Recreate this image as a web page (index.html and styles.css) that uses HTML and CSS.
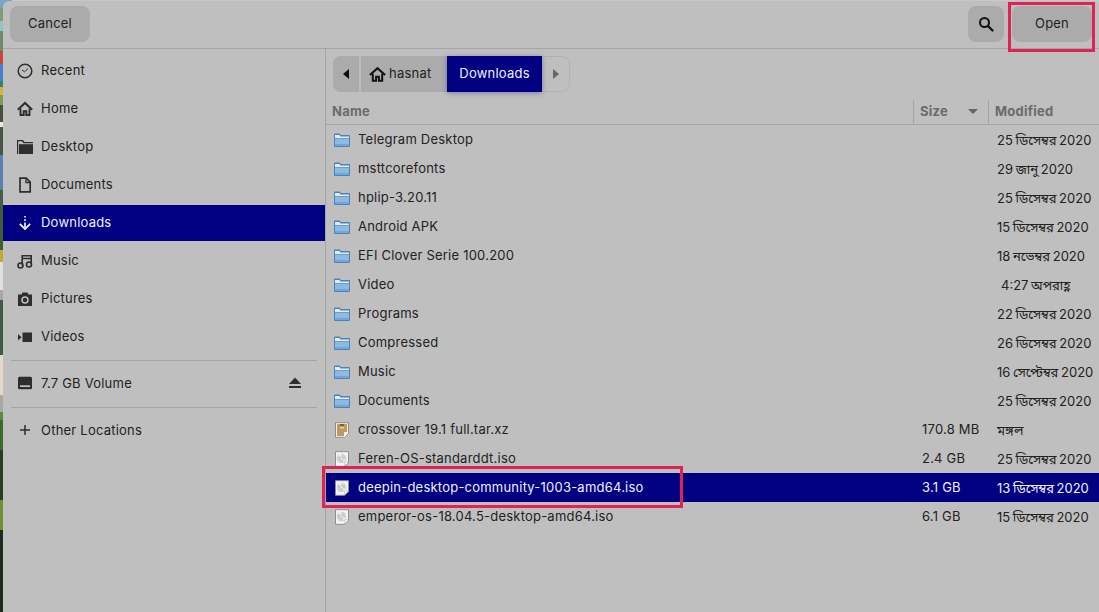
FILE: index.html
```html
<!DOCTYPE html>
<html lang="en">
<head>
<meta charset="utf-8">
<title>Open File</title>
<link rel="stylesheet" href="styles.css">
</head>
<body>
<div class="wallpaper"></div>
<div class="dialog">
  <header class="headerbar">
    <button class="btn cancel">Cancel</button>
    <span class="spacer"></span>
    <button class="btn search">
      <svg width="16" height="16" viewBox="0 0 16 16"><circle cx="6.500" cy="6.500" r="4.500" fill="none" stroke="#111" stroke-width="2"/><path d="M10 10l4.500 4.500" stroke="#111" stroke-width="2.400" stroke-linecap="round"/></svg>
    </button>
    <button class="btn open">Open</button>
  </header>
  <div class="main">
    <nav class="sidebar">
      <div class="place"><svg class="ico" viewBox="0 0 16 16"><circle cx="8" cy="8" r="6.800" fill="none" stroke="#2e2e2e" stroke-width="1.500"/><path d="M5 7l2.500 1.800L11 5.500" fill="none" stroke="#2e2e2e" stroke-width="1"/></svg><span>Recent</span></div>
      <div class="place"><svg class="ico" viewBox="0 0 16 16"><path d="M.8 8.800L8 2l7.200 6.800" fill="none" stroke="#2e2e2e" stroke-width="2"/><path d="M3.500 7.500V14h3.200v-3.800h2.600V14h3.200V7.500" fill="none" stroke="#2e2e2e" stroke-width="1.900"/></svg><span>Home</span></div>
      <div class="place"><svg class="ico" viewBox="0 0 16 16"><path d="M0 1h6l1.500 2H16v1.200H6.500L5 2.200H1.200V15H0z" fill="#2e2e2e"/><path d="M2 5.200h14V15H2z" fill="#2e2e2e"/></svg><span>Desktop</span></div>
      <div class="place"><svg class="ico" viewBox="0 0 16 16"><path d="M3 1.200h6.300L13.200 5v9.800H3z" fill="none" stroke="#2e2e2e" stroke-width="1.700"/><path d="M9 1v4.500h4.500" fill="none" stroke="#2e2e2e" stroke-width="1.300"/></svg><span>Documents</span></div>
      <div class="place selected"><svg class="ico" viewBox="0 0 16 16"><path d="M8 1v1.600M8 4.300v1.600M8 7.600v5" stroke="#fff" stroke-width="1.600" fill="none"/><path d="M2.800 8.800L8 14l5.200-5.200" stroke="#fff" stroke-width="1.700" fill="none"/></svg><span>Downloads</span></div>
      <div class="place"><svg class="ico" viewBox="0 0 16 16"><circle cx="3.500" cy="12.500" r="2.500" fill="none" stroke="#2e2e2e" stroke-width="1.600"/><circle cx="12" cy="11.500" r="2.500" fill="none" stroke="#2e2e2e" stroke-width="1.600"/><path d="M5.200 12.500V2.800h9V11M5.200 5.500h9" fill="none" stroke="#2e2e2e" stroke-width="1.600"/></svg><span>Music</span></div>
      <div class="place"><svg class="ico" viewBox="0 0 16 16"><path d="M1 3.500h3.500L5.500 1.500h5l1 2H15V15H1z" fill="#2e2e2e"/><circle cx="8" cy="9" r="3" fill="none" stroke="#bfbfbf" stroke-width="1.500"/></svg><span>Pictures</span></div>
      <div class="place"><svg class="ico" viewBox="0 0 16 16"><path d="M5.500 3.500H15V13H5.500zM1 5l3.500 3.200L1 11.500z" fill="#2e2e2e"/></svg><span>Videos</span></div>
      <div class="sep"></div>
      <div class="place volume"><svg class="ico" viewBox="0 0 16 16"><path d="M2.500 1.800h11A1.500 1.500 0 0115 3.300v9.500a1.500 1.500 0 01-1.500 1.500h-11A1.500 1.500 0 011 12.800V3.300a1.500 1.500 0 011.500-1.500z" fill="#2e2e2e"/><path d="M3 10.300h10v1.700H3z" fill="#bfbfbf"/></svg><span>7.7 GB Volume</span><span class="spacer"></span><svg class="eject" viewBox="0 0 14 14"><path d="M7 1.500l6 6.500H1z" fill="#2e2e2e"/><path d="M1 10h12v2H1z" fill="#2e2e2e"/></svg></div>
      <div class="sep"></div>
      <div class="place other"><svg class="ico" viewBox="0 0 16 16"><path d="M8 3v10M3 8h10" stroke="#2e2e2e" stroke-width="1.500"/></svg><span>Other Locations</span></div>
    </nav>
    <section class="content">
      <div class="pathbar">
        <div class="path">
          <span class="seg arrow"><svg width="7" height="10" viewBox="0 0 7 10"><path d="M6 0v10L0 5z" fill="#111"/></svg></span>
          <span class="seg home"><svg width="17" height="15" viewBox="0 0 17 15"><path d="M.9 8L8.500 1.200 16.100 8" fill="none" stroke="#111" stroke-width="2.100"/><path d="M3.800 6.800v7h3.300V9.800h2.800v4h3.300v-7" fill="none" stroke="#111" stroke-width="2"/></svg><span class="lbl">hasnat</span></span>
          <span class="seg current"><span class="lbl">Downloads</span></span>
          <span class="seg arrow next"><svg width="7" height="10" viewBox="0 0 7 10"><path d="M0 0v10l6-5z" fill="#666"/></svg></span>
        </div>
      </div>
      <div class="heads">
        <div class="h h-name">Name</div>
        <div class="h h-size">Size<svg width="10" height="5" viewBox="0 0 10 5"><path d="M0 0h10L5 5z" fill="#666"/></svg></div>
        <div class="h h-mod">Modified</div>
      </div>
      <div class="rows">
        <div class="row"><svg class="fi"><use href="#folder"/></svg><span class="n">Telegram Desktop</span><span class="s"></span><span class="m">25 ডিসেম্বর 2020</span></div>
        <div class="row"><svg class="fi"><use href="#folder"/></svg><span class="n">msttcorefonts</span><span class="s"></span><span class="m">29 জানু 2020</span></div>
        <div class="row"><svg class="fi"><use href="#folder"/></svg><span class="n">hplip-3.20.11</span><span class="s"></span><span class="m">25 ডিসেম্বর 2020</span></div>
        <div class="row"><svg class="fi"><use href="#folder"/></svg><span class="n">Android APK</span><span class="s"></span><span class="m">15 ডিসেম্বর 2020</span></div>
        <div class="row"><svg class="fi"><use href="#folder"/></svg><span class="n">EFI Clover Serie 100.200</span><span class="s"></span><span class="m">18 নভেম্বর 2020</span></div>
        <div class="row"><svg class="fi"><use href="#folder"/></svg><span class="n">Video</span><span class="s"></span><span class="m time">4:27 অপরাহ্ণ</span></div>
        <div class="row"><svg class="fi"><use href="#folder"/></svg><span class="n">Programs</span><span class="s"></span><span class="m">22 ডিসেম্বর 2020</span></div>
        <div class="row"><svg class="fi"><use href="#folder"/></svg><span class="n">Compressed</span><span class="s"></span><span class="m">26 ডিসেম্বর 2020</span></div>
        <div class="row"><svg class="fi"><use href="#folder"/></svg><span class="n">Music</span><span class="s"></span><span class="m">16 সেপ্টেম্বর 2020</span></div>
        <div class="row"><svg class="fi"><use href="#folder"/></svg><span class="n">Documents</span><span class="s"></span><span class="m">25 ডিসেম্বর 2020</span></div>
        <div class="row"><svg class="fi"><use href="#archive"/></svg><span class="n">crossover 19.1 full.tar.xz</span><span class="s">170.8 MB</span><span class="m">মঙ্গল</span></div>
        <div class="row"><svg class="fi"><use href="#disc"/></svg><span class="n">Feren-OS-standarddt.iso</span><span class="s">2.4 GB</span><span class="m">25 ডিসেম্বর 2020</span></div>
        <div class="row active"><svg class="fi"><use href="#disc"/></svg><span class="n">deepin-desktop-community-1003-amd64.iso</span><span class="s">3.1 GB</span><span class="m">13 ডিসেম্বর 2020</span></div>
        <div class="row"><svg class="fi"><use href="#disc"/></svg><span class="n">emperor-os-18.04.5-desktop-amd64.iso</span><span class="s">6.1 GB</span><span class="m">15 ডিসেম্বর 2020</span></div>
      </div>
    </section>
  </div>
</div>
<div class="mark mark-open"></div>
<div class="mark mark-file"></div>
<svg class="defs" width="0" height="0">
  <symbol id="folder" viewBox="0 0 16 16"><path d="M0 2.500a1 1 0 011-1h4.500L7 3h8a1 1 0 011 1v10a1 1 0 01-1 1H1a1 1 0 01-1-1z" fill="#4a82bb"/><path d="M1 3h4.200L6.700 4.500H15V6H1z" fill="#e2edf6"/><path d="M1 6.500h14V14H1z" fill="#8dbae2"/><path d="M1 12h14v2H1z" fill="#75a5d2"/></symbol>
  <symbol id="archive" viewBox="0 0 16 16"><path d="M1.500 .7h13v10.500L10.700 15.300H1.500z" fill="#f4f1ea" stroke="#8e8c86"/><path d="M3 2h10v8H10v4H3z" fill="#bd9a5d"/><path d="M6 2h4v2H6z" fill="#7f6230"/><path d="M6 5h4v1.500H6z" fill="#e3d3ac"/><path d="M10.500 15v-4H14z" fill="#fff"/></symbol>
  <symbol id="disc" viewBox="0 0 16 16"><path d="M1.500 .7h13v10.500L10.700 15.300H1.500z" fill="#f5f5f5" stroke="#8f8f8f"/><circle cx="7.500" cy="7.500" r="4.800" fill="#cfcfcf"/><path d="M7.500 7.500L4 3.500A5 5 0 017.500 2.700zM7.500 7.500l4.500 1.500a5 5 0 01-2 2.600z" fill="#ededed"/><circle cx="7.500" cy="7.500" r="1.500" fill="#f5f5f5" stroke="#999" stroke-width=".5"/><path d="M10.500 15v-4.200H14.500z" fill="#fff" stroke="#aaa" stroke-width=".5"/></symbol>
</svg>
</body>
</html>
```
FILE: styles.css
```css
* { box-sizing: border-box; }
html, body { margin: 0; height: 100%; overflow: hidden; }
body {
  position: relative;
  width: 1099px;
  height: 612px;
  font-family: Inter, "Noto Sans", "Noto Sans Bengali", "Lohit Bengali", sans-serif;
  font-size: 13px;
  letter-spacing: .22px;
  color: #222;
  background: #c8c8c8;
}
.wallpaper {
  position: absolute;
  left: 0; top: 0; bottom: 0;
  width: 12px;
  background: linear-gradient(180deg,
    #7fa2c9 0 8px, #7f9c78 8px 21px, #8fc8c0 21px 31px, #6f8a6a 31px 51px,
    #c8463c 51px 64px, #4a7fd0 64px 81px, #2f8a5a 81px 87px, #d9b23c 87px 95px,
    #7d9a5a 95px 105px, #45503f 105px 122px, #e8e8e8 122px 127px, #4a5548 127px 155px,
    #5a80b0 155px 190px, #4a5a4a 190px 205px, #3f5f33 205px 250px, #c9a92c 250px 262px,
    #e0e0e0 262px 290px, #a8a8a8 290px 300px, #3f5a48 300px 355px, #e4d8c8 355px 395px,
    #a8a8a8 395px 412px, #5d8a3a 412px 420px, #3c6a28 420px 450px, #2a3d22 450px 500px,
    #6f8f30 500px 530px, #1f2a1c 530px 612px);
}
.dialog {
  position: absolute;
  left: 3px; top: 1px; right: 0; bottom: 0;
  display: flex;
  flex-direction: column;
  background: #bfbfbf;
  border-radius: 6px 6px 0 0;
}
.headerbar {
  height: 48px;
  flex: none;
  display: flex;
  align-items: center;
  padding: 5px 7px 6px 7px;
  gap: 8px;
  border-bottom: 1px solid #a5a5a5;
}
.spacer { flex: 1; }
.btn {
  height: 36px;
  border: 0;
  border-radius: 8px;
  background: #ababab;
  font: inherit;
  letter-spacing: inherit;
  color: #222;
  padding: 0 0 2px;
}
.cancel { width: 80px; }
.search { width: 36px; display: flex; align-items: center; justify-content: center; padding: 0; }
.open { width: 80px; }
.main { flex: 1; display: flex; min-height: 0; }
.sidebar {
  width: 323px;
  flex: none;
  border-right: 1px solid #a5a5a5;
  padding-top: 4px;
}
.place {
  height: 36px;
  margin-bottom: 2px;
  display: flex;
  align-items: center;
  padding: 0 23px 0 14px;
  gap: 8px;
  color: #222;
  white-space: nowrap;
}
.place span:not(.spacer) { padding-bottom: 2px; }
.place.volume span:not(.spacer), .place.other span:not(.spacer) { padding-bottom: 0; }
.ico { width: 16px; height: 16px; flex: none; }
.place.selected { background: #000080; color: #f0f0ff; }
.eject { width: 14px; height: 14px; }
.sep { height: 1px; margin: 5px 8px 4px; background: #a5a5a5; }
.place.volume { margin-bottom: 6px; }
.content { flex: 1; min-width: 0; display: flex; flex-direction: column; }
.pathbar { height: 51px; flex: none; padding: 7px 0 0 7px; }
.path {
  display: inline-flex;
  height: 36px;
  border-radius: 8px;
  border: 1px solid #b2b2b2;
}
.seg { display: flex; align-items: center; height: 36px; margin-top: -1px; background: #ababab; }
.lbl { padding-bottom: 2px; }
.arrow { width: 26px; justify-content: center; border-radius: 8px 0 0 8px; margin-left: -1px; }
.seg.home { margin-left: 2px; width: 86px; padding-left: 8px; gap: 3px; color: #222; }
.seg.current { width: 95px; justify-content: center; background: #000080; color: #f0f0ff; box-shadow: 0 1px 5px rgba(0,0,128,.35); position: relative; }
.next { background: transparent; border-radius: 0 8px 8px 0; width: 27px; margin-left: 0; padding-left: 2px; }
.heads {
  height: 25px;
  flex: none;
  display: flex;
  border-bottom: 1px solid #a5a5a5;
  color: #6b6b6b;
  font-weight: 700;
  font-size: 13px;
}
.h { display: flex; align-items: center; padding-left: 6px; padding-bottom: 2px; height: 24px; }
.h-name { width: 587px; }
.h-size { width: 75px; border-left: 1px solid #a5a5a5; justify-content: space-between; padding-right: 10px; }
.h-mod { flex: 1; border-left: 1px solid #a5a5a5; }
.row {
  height: 29px;
  display: flex;
  align-items: center;
  padding-left: 8px;
  color: #222;
  white-space: nowrap;
}
.fi { width: 16px; height: 16px; flex: none; margin-right: 8px; }
.n { width: 564px; flex: none; overflow: hidden; padding-bottom: 2px; }
.s { width: 75px; flex: none; padding-bottom: 2px; }
.m { flex: 1; letter-spacing: 0; word-spacing: -1px; padding-top: 2px; }
.time { padding-left: 4px; }
.row.active { background: #000080; color: #f0f0ff; }
.mark { position: absolute; border: 3px solid #dc2456; pointer-events: none; }
.mark-open { left: 1008px; top: 2px; width: 87px; height: 50px; }
.mark-file { left: 322px; top: 466px; width: 361px; height: 42px; }
.defs { position: absolute; }
```
